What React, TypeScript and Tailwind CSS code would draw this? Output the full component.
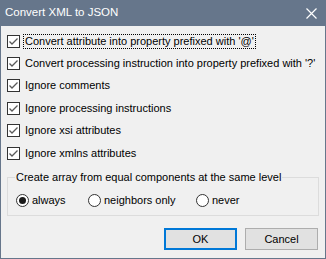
import { useState } from 'react';

const OPTIONS = [
  "Convert attribute into property prefixed with '@'",
  "Convert processing instruction into property prefixed with '?'",
  'Ignore comments',
  'Ignore processing instructions',
  'Ignore xsi attributes',
  'Ignore xmlns attributes',
];

const MODES = [
  { label: 'always', w: 'w-[72px]' },
  { label: 'neighbors only', w: 'w-[108px]' },
  { label: 'never', w: 'w-[60px]' },
];

function CheckBox({ checked }: { checked: boolean }) {
  return (
    <span className="w-[13px] h-[13px] border border-[#333333] bg-white flex items-center justify-center shrink-0">
      {checked && (
        <svg width="11" height="11" viewBox="0 0 11 11">
          <path d="M1.5 5.5 L4 8 L9.5 2.5" fill="none" stroke="#5a5a5a" strokeWidth="1.3" />
        </svg>
      )}
    </span>
  );
}

function Radio({ checked }: { checked: boolean }) {
  return (
    <span className="w-[13px] h-[13px] rounded-full border border-[#333333] bg-white flex items-center justify-center shrink-0">
      {checked && <span className="w-[7px] h-[7px] rounded-full bg-[#1a1a1a]" />}
    </span>
  );
}

export default function App() {
  const [checked, setChecked] = useState(OPTIONS.map(() => true));
  const [mode, setMode] = useState(0);

  return (
    <div
      className="w-[326px] h-[259px] flex flex-col bg-[#f0f0f0] border-x border-b border-[#66768b] text-[11px] text-black whitespace-nowrap"
      style={{ fontFamily: '"Liberation Sans", Arial, sans-serif' }}
    >
      <div className="h-[26px] shrink-0 -mx-px bg-[#66768b] flex items-center justify-between pl-[5px] pr-[9px]">
        <span className="text-white text-[11.5px]">Convert XML to JSON</span>
        <svg width="11" height="11" viewBox="0 0 11 11">
          <path d="M0.5 0.5 L10.5 10.5 M10.5 0.5 L0.5 10.5" stroke="#ffffff" strokeWidth="1.2" />
        </svg>
      </div>

      <div className="flex flex-col pt-[4px] pl-[6px]">
        {OPTIONS.map((label, i) => (
          <label
            key={label}
            className="h-[22.4px] flex items-center gap-[4px] cursor-default"
            onClick={() => setChecked(c => c.map((v, j) => (j === i ? !v : v)))}
          >
            <CheckBox checked={checked[i]} />
            <span className={i === 0 ? 'outline outline-1 outline-dotted outline-black px-px leading-[13px]' : 'px-px leading-[13px]'}>
              {label}
            </span>
          </label>
        ))}
      </div>

      <fieldset className="mt-[7px] mx-[6px] h-[45px] border border-[#dcdcdc] pl-[8px] pt-0 pb-0 m-0">
        <legend className="px-[1px] -ml-[1px] leading-[13px]">Create array from equal components at the same level</legend>
        <div className="flex items-center mt-[8px]">
          {MODES.map((m, i) => (
            <label key={m.label} className={`${m.w} flex items-center gap-[3px]`} onClick={() => setMode(i)}>
              <Radio checked={mode === i} />
              <span>{m.label}</span>
            </label>
          ))}
        </div>
      </fieldset>

      <div className="flex justify-end gap-[8px] pr-[7px] mt-[12px]">
        <button className="w-[73px] h-[22px] bg-[#e1e1e1] border-2 border-[#0078d7]">OK</button>
        <button className="w-[73px] h-[22px] bg-[#e1e1e1] border border-[#adadad]">Cancel</button>
      </div>
    </div>
  );
}
